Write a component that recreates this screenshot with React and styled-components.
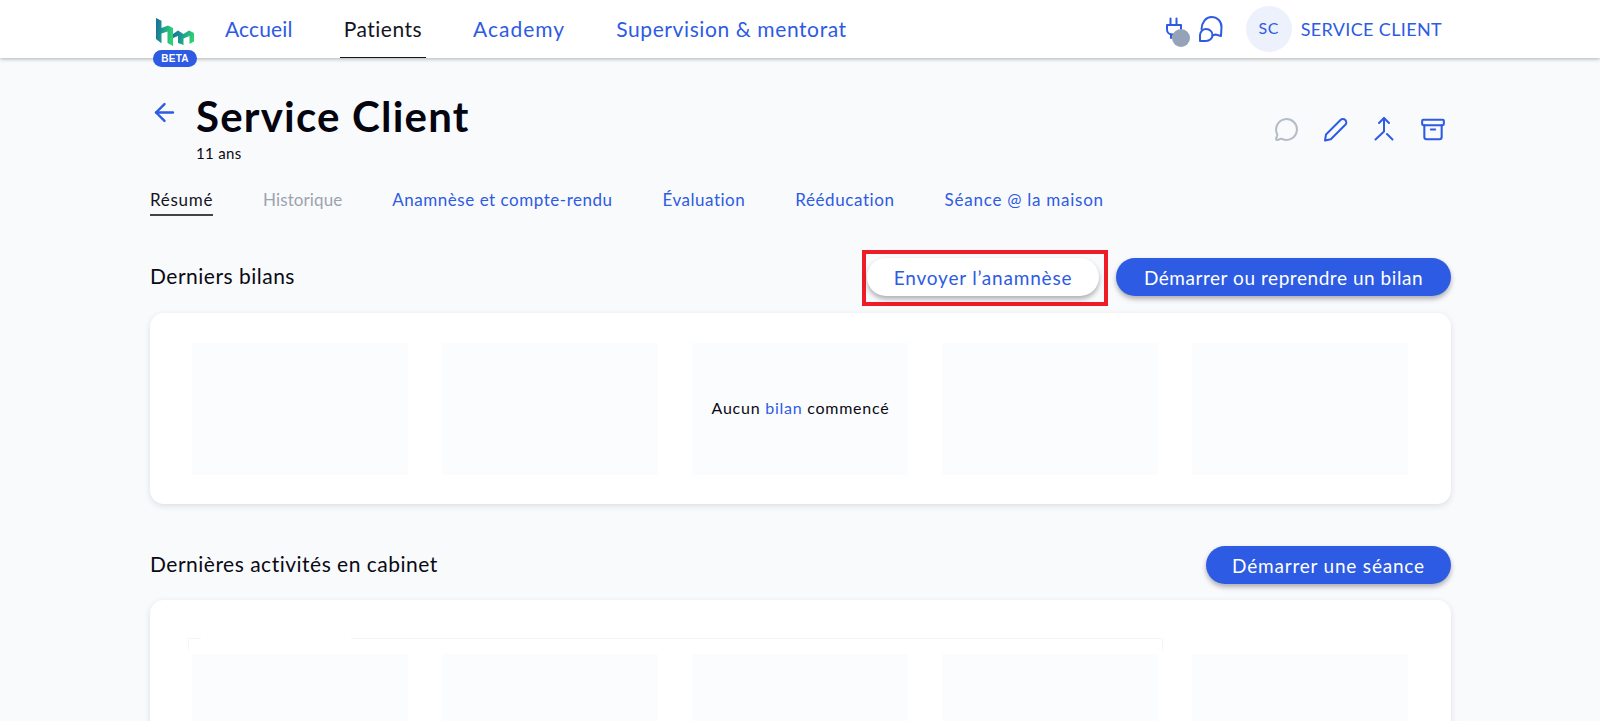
import React from "react";
import styled, { createGlobalStyle } from "styled-components";
import { ArrowLeft, MessageCircle, Archive } from "lucide-react";

const BLUE = "#2d5be3";
const Global = createGlobalStyle`
  html, body { margin: 0; height: 721px; overflow: hidden; background: #f9fafc; }
  body { font-family: "Lato", "Noto Sans", sans-serif; color: #0a0a14; }
  #root { height: 721px; overflow: hidden; }
  * { box-sizing: border-box; }
`;

const Header = styled.header`
  height: 58px; background: #fff; box-shadow: 0 1px 4px rgba(0,0,0,.3);
  display: flex; align-items: stretch; padding: 0 158px 0 156px; position: relative; z-index: 2;
`;
const LogoWrap = styled.div`position: relative; width: 40px; height: 58px; margin-right: 25px;`;
const Beta = styled.span`
  position: absolute; left: -3px; top: 50px; width: 44px; height: 17px; border-radius: 9px;
  background: ${BLUE}; color: #fff; font: 700 10px/17px "Liberation Sans", sans-serif; text-align: center; letter-spacing: .3px;
`;
const LogoSvg = styled.svg`position: absolute; left: 0; top: 17px;`;
const Nav = styled.nav`display: flex; gap: 43px; flex: 1;`;
const NavItem = styled.a`
  padding: 0 4px; display: flex; align-items: center; font-size: 21px; letter-spacing: ${p => p.$ls || ".6px"};
  color: ${p => p.$active ? "#14141e" : BLUE}; height: 58px;
  border-bottom: 1px solid ${p => p.$active ? "#14141e" : "transparent"};
`;
const HeadRight = styled.div`display: flex; align-items: center; color: ${BLUE};`;
const PlugBox = styled.div`position: relative; width: 32px; height: 26px;`;
const Dot = styled.span`position: absolute; left: 6px; top: 13px; width: 18px; height: 18px; border-radius: 50%; background: #94a3b8;`;
const Avatar = styled.div`
  width: 46px; height: 46px; border-radius: 50%; background: #edf1fc; display: flex; align-items: center; justify-content: center;
  font-size: 16px; margin: 0 9px 0 22px; letter-spacing: .5px; padding-bottom: 3px;
`;
const UserName = styled.span`font-size: 18px; letter-spacing: .35px;`;

const Main = styled.main`padding: 0 149px 0 150px;`;
const TitleRow = styled.div`display: flex; height: 122px; position: relative;`;
const Back = styled.div`color: ${BLUE}; width: 46px; padding-top: 40px;`;
const TitleCol = styled.div`flex: 1; padding-top: 31px;`;
const Title = styled.h1`margin: 0; font-size: 42px; line-height: 54px; font-weight: 700; letter-spacing: 1.2px; color: #050510;`;
const Age = styled.div`font-size: 15px; line-height: 22px; margin-top: -1px; letter-spacing: .35px;`;
const Actions = styled.div`display: flex; gap: 23px; align-items: flex-start; padding: 58px 5px 0 0;`;
const ActionIcon = styled.span`color: ${p => p.$muted ? "#b4bcc8" : BLUE}; display: flex; width: 26px; height: 26px; align-items: center; justify-content: center;`;

const Tabs = styled.div`display: flex; gap: 50px; height: 38px; align-items: flex-start;`;
const Tab = styled.a`
  font-size: 17px; line-height: 24px; height: 36px; padding-top: 8px; letter-spacing: ${p => p.$ls || ".5px"};
  color: ${p => p.$state === "active" ? "#14141e" : p.$state === "muted" ? "#9ca3af" : BLUE};
  border-bottom: ${p => p.$state === "active" ? "2px solid #444" : "none"};
`;

const SectionHead = styled.div`display: flex; align-items: center; height: ${p => p.$h}px; margin-top: ${p => p.$mt}px;`;
const SectionTitle = styled.h2`flex: 1; margin: 0; padding-bottom: 3px; font-size: 21px; font-weight: 400; letter-spacing: .5px; color: #0a0a14;`;
const Highlight = styled.div`border: 4px solid #ee1c25; padding: 4px 5px 6px 1px; margin-right: 8px; display: flex; align-self: flex-start;`;
const Btn = styled.button`
  height: 38px; border: 0; border-radius: 19px; font-family: inherit; font-size: 19px; letter-spacing: ${p => p.$ls}; padding: 0;
  width: ${p => p.$w}px; background: ${p => p.$primary ? BLUE : "#fff"}; color: ${p => p.$primary ? "#fff" : BLUE};
  box-shadow: 0 3px 5px rgba(60,60,70,.4);
`;

const Card = styled.section`
  background: #fff; border-radius: 14px; box-shadow: 0 2px 6px rgba(40,40,60,.13); position: relative;
  height: ${p => p.$h}px; margin-top: ${p => p.$mt}px; padding-top: ${p => p.$pt}px;
`;
const Blocks = styled.div`display: grid; grid-template-columns: repeat(5, 216px); gap: 34px; padding-left: 42px;`;
const Block = styled.div`height: 132px; background: #fbfcfe;`;
const Empty = styled.div`
  position: absolute; left: 0; right: 0; top: 85px; text-align: center; font-size: 16px; line-height: 20px; letter-spacing: .75px;
`;
const BlueWord = styled.span`color: ${BLUE};`;
const Frame = styled.div`
  position: absolute; left: 38px; top: 38px; width: 975px; height: 13px;
  border: 1px solid #f6f6f9; border-bottom: 0;
`;
const FrameGap = styled.span`position: absolute; left: 12px; top: -1px; width: 150px; height: 1px; background: #fff;`;

const strokeProps = { fill: "none", stroke: "currentColor", strokeWidth: 2, strokeLinecap: "round", strokeLinejoin: "round" };

const Plug = () => (
  <svg width="18" height="26" viewBox="0 0 18 26" {...strokeProps}>
    <path d="M4.5 2.500v6M10.500 2.500v6" />
    <path d="M1 9h14v4.500a5 5 0 0 1-5 5H6a5 5 0 0 1-5-5z" />
    <path d="M5 18.500V22" />
  </svg>
);
const Bubbles = () => (
  <svg width="26" height="28" viewBox="0 0 26 28" {...strokeProps}>
    <path d="M3.500 14C4 7 8 2 13.500 2 19 2 23.500 6 23.500 12L23 21l-5.500-1.500-3 1" />
    <path d="M2 26v-6c0-3.500 3-6 6-6 4 0 6.500 3 6.500 6 0 3.500-3 6-6.500 6z" />
  </svg>
);
const Merge = () => (
  <svg width="26" height="26" viewBox="0 0 26 26" {...strokeProps}>
    <path d="M8 7l5-5 5 5" /><path d="M13 2v13.500L4.500 23.500" /><path d="M16 18l5.500 5.500" />
  </svg>
);
const PencilIcon = () => (
  <svg width="26" height="26" viewBox="0 0 26 26" {...strokeProps}>
    <path d="M3 24.500l1-6L18.500 4a3.300 3.300 0 0 1 4.800 4.800L8.800 23.300z" />
  </svg>
);

const Logo = () => (
  <LogoSvg width="40" height="30" viewBox="0 0 40 30">
    <defs>
      <linearGradient id="lg" x1="0" x2="1" y1="0" y2="0.2">
        <stop offset="0" stopColor="#1b6a9c" />
        <stop offset="0.45" stopColor="#1c9a90" />
        <stop offset="1" stopColor="#2fcf74" />
      </linearGradient>
    </defs>
    <path fill="url(#lg)" d="M0 1l5.500 2.700V11L12 8.500l5 2.500v18l-5.500-3V14.500l-6 2v10L0 22z" />
    <path fill="url(#lg)" d="M17 17l5-3.500 5.500 3.500 5.500-3.500 5 2.500v8.500L33.500 27v-8l-6 2.500V28L22 26v-7l-5 2z" />
  </LogoSvg>
);

export default function App() {
  return (
    <>
      <Global />
      <Header>
        <LogoWrap><Logo /><Beta>BETA</Beta></LogoWrap>
        <Nav>
          <NavItem $ls=".15px">Accueil</NavItem>
          <NavItem $active $ls=".5px">Patients</NavItem>
          <NavItem $ls="1px">Academy</NavItem>
          <NavItem>Supervision &amp; mentorat</NavItem>
        </Nav>
        <HeadRight>
          <PlugBox><Plug /><Dot /></PlugBox>
          <Bubbles />
          <Avatar>SC</Avatar>
          <UserName>SERVICE CLIENT</UserName>
        </HeadRight>
      </Header>
      <Main>
        <TitleRow>
          <Back><ArrowLeft size={29} strokeWidth={2} /></Back>
          <TitleCol>
            <Title>Service Client</Title>
            <Age>11 ans</Age>
          </TitleCol>
          <Actions>
            <ActionIcon $muted><MessageCircle size={25} strokeWidth={2} /></ActionIcon>
            <ActionIcon><PencilIcon /></ActionIcon>
            <ActionIcon><Merge /></ActionIcon>
            <ActionIcon><Archive size={27} strokeWidth={1.9} /></ActionIcon>
          </Actions>
        </TitleRow>
        <Tabs>
          <Tab $state="active" $ls=".7px">Résumé</Tab>
          <Tab $state="muted" $ls=".1px">Historique</Tab>
          <Tab $ls=".53px">Anamnèse et compte-rendu</Tab>
          <Tab>Évaluation</Tab>
          <Tab $ls=".6px">Rééducation</Tab>
          <Tab $ls=".75px">Séance @ la maison</Tab>
        </Tabs>
        <SectionHead $h={54} $mt={32}>
          <SectionTitle>Derniers bilans</SectionTitle>
          <Highlight><Btn $w={232} $ls=".8px">Envoyer l’anamnèse</Btn></Highlight>
          <Btn $primary $w={335} $ls=".55px">Démarrer ou reprendre un bilan</Btn>
        </SectionHead>
        <Card $h={191} $mt={9} $pt={30}>
          <Blocks>{[0,1,2,3,4].map(i => <Block key={i} />)}</Blocks>
          <Empty>Aucun <BlueWord>bilan</BlueWord> commencé</Empty>
        </Card>
        <SectionHead $h={38} $mt={42}>
          <SectionTitle>Dernières activités en cabinet</SectionTitle>
          <Btn $primary $w={245} $ls=".8px">Démarrer une séance</Btn>
        </SectionHead>
        <Card $h={200} $mt={16} $pt={54}>
          <Frame><FrameGap /></Frame>
          <Blocks>{[0,1,2,3,4].map(i => <Block key={i} />)}</Blocks>
        </Card>
      </Main>
    </>
  );
}
